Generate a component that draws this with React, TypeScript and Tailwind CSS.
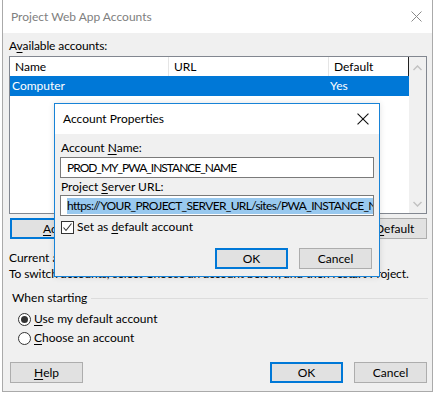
import React from "react";

const font = { fontFamily: 'Lato, Roboto, sans-serif' };

function U({ children }: { children: React.ReactNode }) {
  return <span className="underline underline-offset-2 decoration-1">{children}</span>;
}

function Btn({ children, def, className = "" }: { children: React.ReactNode; def?: boolean; className?: string }) {
  return (
    <div
      className={
        "h-[21px] flex items-center justify-center bg-[#e1e1e1] text-[12px] leading-[16px] text-black " +
        (def ? "border-2 border-[#0078d7] " : "border border-[#adadad] ") +
        className
      }
    >
      {children}
    </div>
  );
}

function CloseX({ color, size = 11 }: { color: string; size?: number }) {
  return (
    <svg width={size} height={size} viewBox="0 0 11 11">
      <path d="M0.5 0.5 L10.5 10.5 M10.5 0.5 L0.5 10.5" stroke={color} strokeWidth="1" fill="none" />
    </svg>
  );
}

function Radio({ checked }: { checked?: boolean }) {
  return (
    <div className="w-[13px] h-[13px] rounded-full border border-[#333] bg-white flex items-center justify-center">
      {checked && <div className="w-[7px] h-[7px] rounded-full bg-[#333]" />}
    </div>
  );
}

export default function App() {
  return (
    <div className="w-[435px] h-[393px] bg-white relative overflow-hidden text-black" style={font}>
      {/* Main window */}
      <div className="ml-[2px] w-[431px] h-[392px] border-x border-b border-[#aaaaaa] flex flex-col">
        <div className="h-[33px] bg-white flex items-center justify-between pl-[8px] pr-[10px]">
          <span className="text-[12px] leading-[16px] text-[#808080]">Project Web App Accounts</span>
          <CloseX color="#8a8a8a" />
        </div>
        <div className="flex-1 bg-[#f0f0f0] flex flex-col pl-[6px] pr-[4px]">
          <div className="mt-[5px] text-[12px] leading-[16px] tracking-[-0.1px]">
            A<U>v</U>ailable accounts:
          </div>
          <div className="mt-[2px] w-[418px] h-[158px] border border-[#828790] bg-white flex">
            <div className="flex-1 flex flex-col">
              <div className="h-[19px] flex text-[12px] leading-[16px] items-stretch">
                <div className="w-[159px] border-r border-[#e5e5e5] pl-[5px] flex items-center">Name</div>
                <div className="w-[160px] border-r border-[#e5e5e5] pl-[5px] flex items-center">URL</div>
                <div className="w-[80px] border-r border-[#222] pl-[5px] flex items-center">Default</div>
              </div>
              <div className="h-[20px] bg-[#0078d7] text-white flex items-center text-[12px] leading-[16px]">
                <div className="w-[318px] pl-[2px]">Computer</div>
                <div className="pl-[2px]">Yes</div>
              </div>
            </div>
            <div className="w-[17px] bg-[#f0f0f0] flex flex-col items-center justify-between pt-[8px] pb-[6px]">
              <svg width="9" height="6" viewBox="0 0 9 6">
                <path d="M0.5 5 L4.5 1 L8.5 5" stroke="#c2c2c2" strokeWidth="1.5" fill="none" />
              </svg>
              <svg width="9" height="6" viewBox="0 0 9 6">
                <path d="M0.5 1 L4.5 5 L8.5 1" stroke="#c2c2c2" strokeWidth="1.5" fill="none" />
              </svg>
            </div>
          </div>
          <div className="mt-[4px] flex justify-between pl-[1px] w-[418px]">
            <Btn def className="w-[96px]">
              <U>A</U>dd...
            </Btn>
            <Btn className="w-[96px]">
              Set as <U>D</U>efault
            </Btn>
          </div>
          <div className="mt-[11px] text-[12px] leading-[16px]">Current account: Computer</div>
          <div className="text-[12px] leading-[16px] whitespace-nowrap tracking-[-0.1px]">
            To switch accounts, select Choose an account below, and then restart Project.
          </div>
          <div className="mt-[8px] flex items-center pl-[3px]">
            <span className="text-[12px] leading-[16px] pr-[4px]">When starting</span>
            <div className="flex-1 h-px bg-[#dcdcdc]" />
          </div>
          <div className="mt-[5px] flex flex-col gap-[3px] pl-[9px]">
            <div className="flex items-center gap-[3px] h-[16px]">
              <Radio checked />
              <span className="text-[12px] leading-[16px]">
                <U>U</U>se my default account
              </span>
            </div>
            <div className="flex items-center gap-[3px] h-[16px]">
              <Radio />
              <span className="text-[12px] leading-[16px]">
                <U>C</U>hoose an account
              </span>
            </div>
          </div>
          <div className="mt-[16px] flex items-center pl-[1px] w-[418px]">
            <Btn className="w-[73px]">
              <U>H</U>elp
            </Btn>
            <div className="flex-1" />
            <Btn def className="w-[73px]">OK</Btn>
            <Btn className="w-[73px] ml-[11px]">Cancel</Btn>
          </div>
        </div>
      </div>

      {/* Account Properties dialog (overlay) */}
      <div className="absolute left-[54px] top-[103px] w-[326px] h-[174px] border border-[#1883d7] flex flex-col shadow-[0_0_6px_rgba(0,0,0,0.12)]">
        <div className="h-[30px] bg-white flex items-center justify-between pl-[8px] pr-[10px]">
          <span className="text-[12px] leading-[16px]">Account Properties</span>
          <CloseX color="#111" size={12} />
        </div>
        <div className="flex-1 bg-[#f0f0f0] flex flex-col pl-[5px] pr-[5px]">
          <div className="mt-[6px] pl-[1px] text-[12px] leading-[16px]">
            Account <U>N</U>ame:
          </div>
          <div className="mt-[1px] h-[21px] w-[314px] bg-white border border-[#7a7a7a] flex items-center pl-[6px] text-[12px] leading-[16px] whitespace-nowrap overflow-hidden tracking-[-1px]">
            PROD_MY_PWA_INSTANCE_NAME
          </div>
          <div className="mt-[1px] pl-[1px] text-[12px] leading-[16px]">
            Project <U>S</U>erver URL:
          </div>
          <div className="h-[21px] w-[314px] bg-white border border-[#7a7a7a] flex items-center pl-[6px] pr-[1px] text-[12px] leading-[16px] whitespace-nowrap overflow-hidden tracking-[-0.65px]">
            <span className="bg-[#99c9ef]">https://YOUR_PROJECT_SERVER_URL/sites/PWA_INSTANCE_NAME</span>
          </div>
          <div className="mt-[3px] flex items-center gap-[3px] pl-[1px] h-[16px]">
            <div className="w-[13px] h-[13px] border border-[#333] bg-white flex items-center justify-center">
              <svg width="11" height="11" viewBox="0 0 11 11">
                <path d="M1.5 5.5 L4 8.5 L9.5 1.5" stroke="#333" strokeWidth="1.1" fill="none" />
              </svg>
            </div>
            <span className="text-[12px] leading-[16px]">
              Set as <U>d</U>efault account
            </span>
          </div>
          <div className="mt-[13px] flex justify-end pr-[2px]">
            <Btn def className="w-[73px]">OK</Btn>
            <Btn className="w-[73px] ml-[11px]">Cancel</Btn>
          </div>
        </div>
      </div>
    </div>
  );
}
